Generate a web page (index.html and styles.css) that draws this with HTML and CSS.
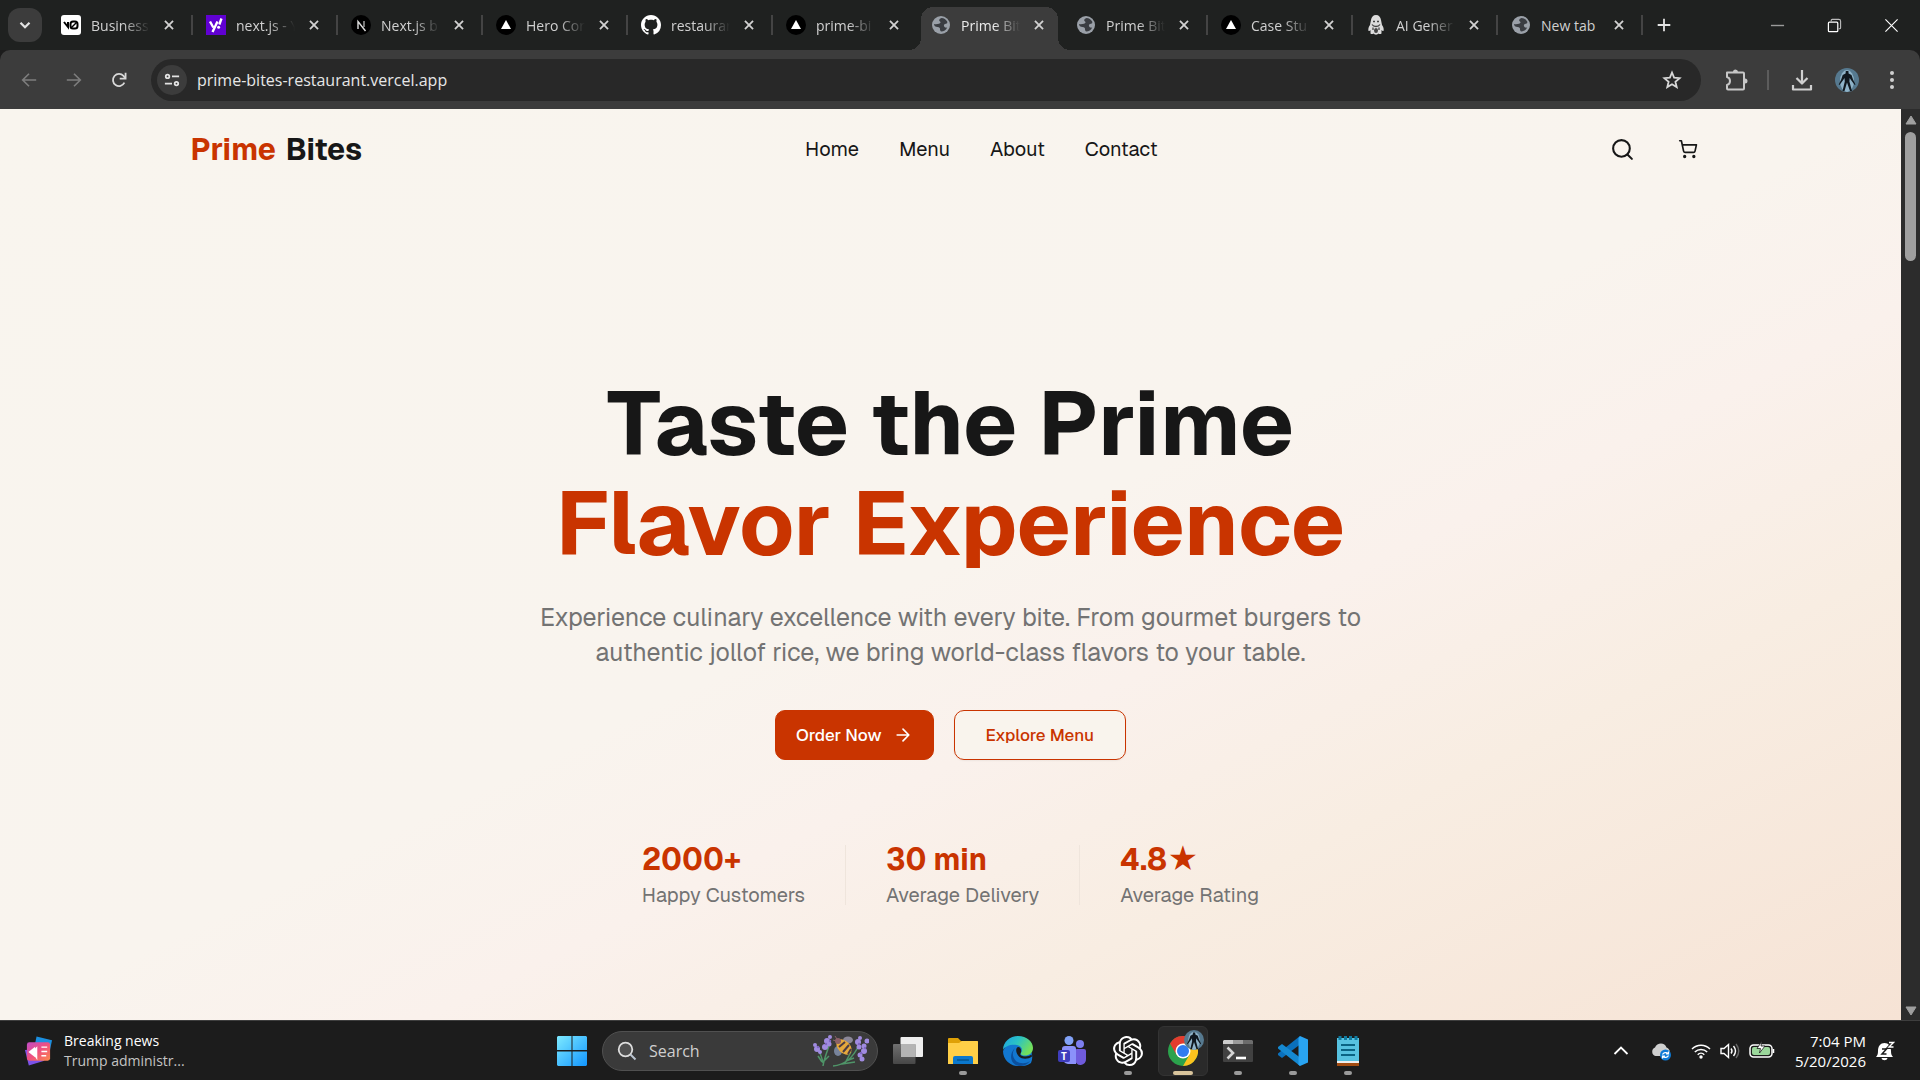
FILE: index.html
```html
<!DOCTYPE html>
<html lang="en">
<head>
    <meta charset="UTF-8">
    <meta name="viewport" content="width=device-width, initial-scale=1.0">
    <title>Prime Bites</title>
    <link rel="stylesheet" href="styles.css">
</head>
<body>
    <!-- Shared icons -->
    <svg class="sprite" aria-hidden="true">
        <symbol id="close" viewBox="0 0 20 20"><path d="M5.500 5.500l9 9M14.500 5.500l-9 9" fill="none" stroke="#d2d2d2" stroke-width="2"/></symbol>
        <symbol id="vercel" viewBox="0 0 20 20"><circle cx="10" cy="10" r="10" fill="#000"/><path d="M10 5l5 9H5z" fill="#fff"/></symbol>
        <symbol id="globe" viewBox="0 0 20 20">
            <circle cx="10" cy="10" r="9" fill="#9aa0a8"/>
            <path d="M10.500 3c-2.500 1-3 2.500-1.500 3.500 1 .6.500 2-1 2.200C6.500 9 5.500 9.500 3 9c0 2 1.500 3 3.500 3 2 0 2.500 1 2.500 2s0 1.500 1 2.500c3 0 5-1.500 6.200-4-1.700.500-2.700-.200-3.200-1.500-.5-1.200.5-2 2-2.200 1-.1 1.500-.8 1.300-2C15 4.500 13 3 10.500 3z" fill="#3a3d42"/>
        </symbol>
        <symbol id="hero-man" viewBox="0 0 24 24">
            <circle cx="12" cy="12" r="12" fill="#56798f"/>
            <ellipse cx="12" cy="13" rx="7" ry="11" fill="#8fb3c8"/>
            <path d="M10.800 3h2.600l.2 2.500 2.900 1.500 1.500 4.500 2.500 5-.8.5-3.700-5-1.300-2-.3 3.500L17 23h-2l-3-8.500L9.500 23h-2L9.800 13.500 9.500 10l-1.300 2-3.700 5-.8-.5 2.500-5L7.700 7l2.900-1.500z" fill="#10181f"/>
        </symbol>
    </svg>

    <!-- Tabs -->
    <header class="tab-strip">
        <button class="tab-search" aria-label="Search tabs"><svg viewBox="0 0 16 16"><path d="M4 6l4 4 4-4" fill="none" stroke="#e3e3e3" stroke-width="2"/></svg></button>
        <div class="tabs">
            <div class="tab">
                <svg class="favicon" viewBox="0 0 20 20"><rect width="20" height="20" rx="3" fill="#fff"/><path d="M3 7l4 5V7" fill="none" stroke="#000" stroke-width="2"/><rect x="9.500" y="6.500" width="7" height="7" rx="2.500" fill="none" stroke="#000" stroke-width="2"/><path d="M10 13l6-6" stroke="#000" stroke-width="1.500"/></svg>
                <span class="tab-title">Business</span>
                <button class="tab-close" aria-label="Close tab"><svg><use href="#close"/></svg></button>
            </div>
            <div class="tab">
                <svg class="favicon" viewBox="0 0 20 20"><rect width="20" height="20" fill="#6001d2"/><path d="M4 6.500l3.300 6M11.500 6.500L6.500 17" fill="none" stroke="#fff" stroke-width="2.400"/><path d="M15.500 3.500l-2.200 6" stroke="#fff" stroke-width="2.400"/><circle cx="12.600" cy="12.200" r="1.500" fill="#fff"/></svg>
                <span class="tab-title">next.js - Y</span>
                <button class="tab-close" aria-label="Close tab"><svg><use href="#close"/></svg></button>
            </div>
            <div class="tab">
                <svg class="favicon" viewBox="0 0 20 20"><circle cx="10" cy="10" r="10" fill="#000"/><path d="M7 14V6.500l7.500 9.500" fill="none" stroke="#ddd" stroke-width="1.400"/><path d="M13 6v6" stroke="#aaa" stroke-width="1.400"/></svg>
                <span class="tab-title">Next.js b</span>
                <button class="tab-close" aria-label="Close tab"><svg><use href="#close"/></svg></button>
            </div>
            <div class="tab">
                <svg class="favicon"><use href="#vercel"/></svg>
                <span class="tab-title">Hero Cor</span>
                <button class="tab-close" aria-label="Close tab"><svg><use href="#close"/></svg></button>
            </div>
            <div class="tab">
                <svg class="favicon" viewBox="0 0 16 16"><path fill="#fff" d="M8 0C3.580 0 0 3.580 0 8c0 3.540 2.290 6.530 5.470 7.590.4.070.55-.17.55-.38 0-.19-.01-.82-.01-1.490-2.010.37-2.530-.49-2.690-.94-.09-.23-.48-.94-.82-1.130-.28-.15-.68-.52-.01-.53.63-.01 1.080.58 1.230.82.72 1.210 1.870.87 2.330.66.07-.52.28-.87.51-1.070-1.780-.2-3.640-.89-3.640-3.950 0-.87.31-1.590.82-2.150-.08-.2-.36-1.020.08-2.120 0 0 .67-.21 2.200.82.64-.18 1.320-.27 2-.27s1.360.09 2 .27c1.530-1.040 2.200-.82 2.200-.82.44 1.100.16 1.920.08 2.120.51.56.82 1.270.82 2.150 0 3.070-1.870 3.750-3.650 3.950.29.25.54.73.54 1.480 0 1.070-.01 1.930-.01 2.200 0 .21.15.46.55.38A8.010 8.010 0 0016 8c0-4.420-3.580-8-8-8z"/></svg>
                <span class="tab-title">restaurar</span>
                <button class="tab-close" aria-label="Close tab"><svg><use href="#close"/></svg></button>
            </div>
            <div class="tab no-line">
                <svg class="favicon"><use href="#vercel"/></svg>
                <span class="tab-title">prime-bi</span>
                <button class="tab-close" aria-label="Close tab"><svg><use href="#close"/></svg></button>
            </div>
            <div class="tab active no-line">
                <svg class="favicon"><use href="#globe"/></svg>
                <span class="tab-title">Prime Bit</span>
                <button class="tab-close" aria-label="Close tab"><svg><use href="#close"/></svg></button>
            </div>
            <div class="tab">
                <svg class="favicon"><use href="#globe"/></svg>
                <span class="tab-title">Prime Bit</span>
                <button class="tab-close" aria-label="Close tab"><svg><use href="#close"/></svg></button>
            </div>
            <div class="tab">
                <svg class="favicon"><use href="#vercel"/></svg>
                <span class="tab-title">Case Stu</span>
                <button class="tab-close" aria-label="Close tab"><svg><use href="#close"/></svg></button>
            </div>
            <div class="tab">
                <svg class="favicon" viewBox="0 0 20 20"><path d="M10 0c3 0 4.500 2 5 5l1 5c1.500 2 2 4 1.500 6-1 0-1.500-.5-2-1v3.500c-1 1-2.500.500-3 0-1 1.500-4 1.500-5 0-1 .7-2.500.7-3 0V15c-.5.600-1 1-2 1-.5-2 0-4 1.500-6l1-5c.5-3 2-5 5-5z" fill="#dcdcdc"/><path d="M7 6.500h2M11 6.500h2M6 9.500c1 1.500 2 2 4 2s3-.5 4-2M7 12.500v2.500M13 12.500v2.500" fill="none" stroke="#444" stroke-width="1.300"/><ellipse cx="10" cy="15.500" rx="2" ry="2.500" fill="#444"/></svg>
                <span class="tab-title">AI Gener</span>
                <button class="tab-close" aria-label="Close tab"><svg><use href="#close"/></svg></button>
            </div>
            <div class="tab">
                <svg class="favicon"><use href="#globe"/></svg>
                <span class="tab-title full">New tab</span>
                <button class="tab-close" aria-label="Close tab"><svg><use href="#close"/></svg></button>
            </div>
        </div>
        <button class="new-tab" aria-label="New tab"><svg viewBox="0 0 20 20"><path d="M10 3v14M3 10h14" stroke="#e3e3e3" stroke-width="2"/></svg></button>
        <div class="window-controls">
            <button aria-label="Minimize"><svg viewBox="0 0 16 16"><path d="M1 8h14" stroke="#9a9a9a" stroke-width="1.500"/></svg></button>
            <button aria-label="Restore"><svg viewBox="0 0 16 16"><path d="M4.500 3.500V2.500a1 1 0 011-1h7a2 2 0 012 2v7a1 1 0 01-1 1h-1" fill="none" stroke="#bbb" stroke-width="1.200"/><rect x="1.500" y="4.500" width="10" height="10" rx="1" fill="none" stroke="#fff" stroke-width="1.300"/></svg></button>
            <button aria-label="Close"><svg viewBox="0 0 16 16"><path d="M1.500 1.500l13 13M14.500 1.500l-13 13" stroke="#fff" stroke-width="1.200"/></svg></button>
        </div>
    </header>

    <!-- Toolbar -->
    <div class="toolbar">
        <div class="nav-buttons">
            <button aria-label="Back"><svg viewBox="0 0 20 20"><path d="M18 10H4M10 3l-7 7 7 7" fill="none" stroke="#7d7d7d" stroke-width="1.800"/></svg></button>
            <button aria-label="Forward"><svg viewBox="0 0 20 20"><path d="M2 10h14M10 3l7 7-7 7" fill="none" stroke="#7d7d7d" stroke-width="1.800"/></svg></button>
            <button aria-label="Reload"><svg viewBox="0 0 20 20"><path d="M16 13a6.700 6.700 0 11-1-7.500L17 8" fill="none" stroke="#d8d8d8" stroke-width="2"/><path d="M17.300 2v6.500h-6.500" fill="none" stroke="#d8d8d8" stroke-width="2"/></svg></button>
        </div>
        <form class="address-bar">
            <button type="button" class="site-info" aria-label="Site information"><svg viewBox="0 0 18 18"><g fill="none" stroke="#e3e3e3" stroke-width="2"><circle cx="4" cy="5" r="2"/><path d="M9 5h8M1 13h8"/><circle cx="14" cy="13" r="2"/></g></svg></button>
            <input type="text" class="address" aria-label="Address" value="prime-bites-restaurant.vercel.app">
            <button type="button" class="bookmark" aria-label="Bookmark"><svg viewBox="0 0 20 20"><path d="M10 2.500l2.100 5.100 5.500.5-4.200 3.600 1.300 5.400-4.700-2.900-4.700 2.900 1.300-5.400-4.200-3.600 5.500-.5z" fill="none" stroke="#d8d8d8" stroke-width="1.800"/></svg></button>
        </form>
        <div class="toolbar-actions">
            <button aria-label="Extensions"><svg viewBox="0 0 24 24"><path d="M3 4.500h16a1 1 0 011 1v15a1 1 0 01-1 1H4a1 1 0 01-1-1V17c4-1 4-7 0-8z" fill="none" stroke="#c7c7c7" stroke-width="2" stroke-linejoin="round"/><path d="M9 4a2.500 2.500 0 015 0zM21 10.500a2.500 2.500 0 010 5z" fill="#c7c7c7"/></svg></button>
            <span class="toolbar-line"></span>
            <button aria-label="Downloads"><svg viewBox="0 0 24 24"><path d="M12 2v13M6.500 10l5.500 5.500L17.500 10M3 17v4.500h18V17" fill="none" stroke="#d0d0d0" stroke-width="2.200" stroke-linejoin="round"/></svg></button>
            <button class="profile" aria-label="Profile"><svg><use href="#hero-man"/></svg></button>
            <button aria-label="Menu"><svg viewBox="0 0 24 24" fill="#d0d0d0"><circle cx="12" cy="5" r="2"/><circle cx="12" cy="12" r="2"/><circle cx="12" cy="19" r="2"/></svg></button>
        </div>
    </div>

    <!-- Page -->
    <div class="viewport">
        <div class="page">
            <nav class="site-nav">
                <a href="#" class="logo"><span>Prime</span> Bites</a>
                <ul class="nav-links">
                    <li><a href="#">Home</a></li>
                    <li><a href="#">Menu</a></li>
                    <li><a href="#">About</a></li>
                    <li><a href="#">Contact</a></li>
                </ul>
                <div class="nav-actions">
                    <button aria-label="Search"><svg class="icon-search" viewBox="0 0 24 24"><circle cx="11" cy="11" r="8"/><path d="M21 21l-4.300-4.300"/></svg></button>
                    <button aria-label="Cart"><svg class="icon-cart" viewBox="0 0 24 24"><circle cx="8" cy="21" r="1"/><circle cx="19" cy="21" r="1"/><path d="M2.050 2.050h2l2.660 12.420a2 2 0 002 1.580h9.780a2 2 0 001.950-1.570l1.650-7.430H5.120"/></svg></button>
                </div>
            </nav>

            <main class="hero">
                <h1>Taste the Prime <span>Flavor Experience</span></h1>
                <p class="lead">Experience culinary excellence with every bite. From gourmet burgers to authentic jollof rice, we bring world-class flavors to your table.</p>
                <div class="hero-buttons">
                    <button class="btn btn-primary">Order Now <svg viewBox="0 0 24 24"><path d="M5 12h14M12 5l7 7-7 7"/></svg></button>
                    <button class="btn btn-outline">Explore Menu</button>
                </div>
                <div class="stats">
                    <div class="stat"><strong>2000+</strong><span>Happy Customers</span></div>
                    <div class="stat"><strong>30 min</strong><span>Average Delivery</span></div>
                    <div class="stat"><strong>4.8★</strong><span>Average Rating</span></div>
                </div>
            </main>
        </div>
        <div class="scrollbar">
            <svg viewBox="0 0 12 10"><path d="M6 1l5 8H1z" fill="#9f9f9f" stroke="#9f9f9f" stroke-linejoin="round"/></svg>
            <div class="thumb"></div>
            <svg viewBox="0 0 12 10"><path d="M6 9l5-8H1z" fill="#9f9f9f" stroke="#9f9f9f" stroke-linejoin="round"/></svg>
        </div>
    </div>

    <!-- Taskbar -->
    <footer class="taskbar">
        <button class="news">
            <svg viewBox="0 0 30 32">
                <defs><linearGradient id="news" x1="0" y1="0" x2="1" y2="1"><stop offset="0" stop-color="#c04bc8"/><stop offset=".5" stop-color="#f0507f"/><stop offset="1" stop-color="#fb8a4a"/></linearGradient></defs>
                <path d="M13 1l16 4-3 14-16-4z" fill="#1b8fe0"/><path d="M1 15l4 16 16-5-3-12z" fill="#7b52e8"/>
                <rect x="3" y="7" width="24" height="19" rx="2.500" fill="url(#news)"/>
                <path d="M4.500 17l7-5.500v11z" fill="#fff"/><path d="M9 17l4 6V13zM18 12h6M18 16.500h6M18 21h5" fill="#fff" stroke="#fff" stroke-width="1.500"/>
            </svg>
            <span class="news-text"><span>Breaking news</span><span class="muted">Trump administr...</span></span>
        </button>

        <div class="apps">
            <button class="app" aria-label="Start"><svg viewBox="0 0 30 30"><defs><linearGradient id="win" x1="0" y1="0" x2="1" y2="1"><stop offset="0" stop-color="#7eeaff"/><stop offset="1" stop-color="#1296ff"/></linearGradient></defs><path d="M1 0h13.500v14H0V1zM15.500 0H29l1 1v13H15.500zM0 15.500h14.500V30H1l-1-1zM15.500 15.500H30V29l-1 1H15.500z" fill="url(#win)"/></svg></button>
            <label class="search">
                <svg class="search-icon" viewBox="0 0 20 20"><circle cx="8.500" cy="8.500" r="6.800" fill="#505050" stroke="#ddd" stroke-width="1.800"/><path d="M13.500 13.500l5 5" stroke="#bbc4d0" stroke-width="2"/></svg>
                <input type="text" placeholder="Search" aria-label="Search">
                <svg class="search-art" viewBox="0 0 56 32">
                    <g fill="none" stroke="#4f9468" stroke-width="1.500"><path d="M10 31c1-7 4-14 6-20M10 28c-1-6-3-10-5-14M9 27l-4-6M11 26l5-5M20 31c12-1 20-8 26-21M32 28l6-11M29 29l13-2M33 26l8-3"/></g>
                    <g fill="#a08be0"><circle cx="2" cy="10" r="2"/><circle cx="4" cy="14" r="3"/><circle cx="7" cy="17" r="2"/><circle cx="17" cy="2" r="2"/><circle cx="14" cy="6" r="3"/><circle cx="16" cy="9" r="2.500"/><circle cx="12" cy="12" r="3"/><circle cx="47" cy="3" r="2"/><circle cx="45" cy="7" r="3"/><circle cx="46" cy="12" r="2.500"/><circle cx="54" cy="6" r="2.500"/><circle cx="51" cy="11" r="2.500"/><circle cx="51" cy="16" r="3"/><circle cx="47" cy="20" r="2.500"/><circle cx="49" cy="24" r="2.500"/></g>
                    <g fill="#8067c4"><circle cx="5" cy="12" r="1.200"/><circle cx="13" cy="9" r="1.200"/><circle cx="17" cy="6" r="1.200"/><circle cx="46" cy="9" r="1.200"/><circle cx="52" cy="13" r="1.200"/><circle cx="48" cy="18" r="1.200"/></g>
                    <ellipse cx="35" cy="5" rx="5" ry="3.500" fill="#8b8798"/><ellipse cx="25" cy="16" rx="4" ry="5" fill="#77839b"/>
                    <ellipse cx="31" cy="12" rx="9" ry="6" fill="#e6a83c" transform="rotate(45 31 12)"/><path d="M26 12l6-5M30 17l6-7M35 19l3-5" stroke="#4c3b44" stroke-width="2"/><circle cx="25" cy="6" r="3" fill="#8b6068"/><path d="M24 4l-2-3M23 6l-3-1" stroke="#8b6068"/>
                </svg>
            </label>
            <button class="app" aria-label="Task view"><svg viewBox="0 0 30 30"><defs><linearGradient id="tv" x1="0" y1="0" x2="0" y2="1"><stop offset="0" stop-color="#707070"/><stop offset="1" stop-color="#474747"/></linearGradient></defs><rect x="7.500" y="1" width="22.500" height="20" rx="1" fill="#eee"/><rect y="8" width="22.500" height="20" rx="1" fill="url(#tv)"/><path d="M8 8h14.500v13H8z" fill="#b4b4b4"/></svg></button>
            <button class="app open" aria-label="File Explorer"><svg viewBox="0 0 30 30"><path d="M0 3a1 1 0 011-1h9l3 3h16a1 1 0 011 1v6H0z" fill="#dfa106"/><path d="M0 7h11l3-2h15a1 1 0 011 1v22H0z" fill="#ffcf47"/><path d="M5 28v-6a2 2 0 012-2h16a2 2 0 012 2v6z" fill="#0b78cd"/><path d="M9 24h12" stroke="#05558f" stroke-width="1.500"/></svg></button>
            <button class="app" aria-label="Edge"><svg viewBox="0 0 30 30"><defs><linearGradient id="edge" x1="0" y1="0" x2="1" y2=".5"><stop offset="0" stop-color="#1ba0e6"/><stop offset=".5" stop-color="#2bc3c4"/><stop offset="1" stop-color="#74e05a"/></linearGradient></defs><path d="M0 15a15 15 0 0128 12C24 30 20 30 16 30A15 15 0 010 15z" fill="#1277d0"/><path d="M0 14C0 6 7 0 15 0c9 0 15 6 15 12 0 5-4 7.500-8 7.500-3 0-5-1-4-2.500 2-3 1-7-4-8C8 8 2 10 0 14z" fill="url(#edge)"/><path d="M12 12c-3 4-3 9 1 13 4 3 10 3 14 0-2 3-6 5-11 5C8 29 5 19 12 12z" fill="#0c4f9c"/><path d="M15 11c3 0 4 4 2.500 6.500-1 1.500 1 3 4.500 3 3 0 5-1 6.500-2l.5 2c-4 3-10 3-13 0-3-3-4-8-1-9.500z" fill="#1c1c1c"/></svg></button>
            <button class="app" aria-label="Teams"><svg viewBox="0 0 30 30"><circle cx="11" cy="4.500" r="4.500" fill="#82a2f7"/><circle cx="22" cy="8" r="4" fill="#7d7ff0"/><path d="M17 15a2 2 0 012-2h7a2 2 0 012 2v8a5 5 0 01-11 1z" fill="#6f5bdc"/><path d="M4 13a3 3 0 013-3h8a3 3 0 013 3v15H10a7 7 0 01-6-7z" fill="#8b91fa"/><rect y="14" width="12" height="12" rx="2" fill="#3f3dbd"/><text x="6" y="24" text-anchor="middle" class="teams-t">T</text></svg></button>
            <button class="app open" aria-label="ChatGPT"><svg viewBox="0 0 24 24"><path fill="#fff" d="M22.282 9.821a5.985 5.985 0 00-.516-4.910 6.046 6.046 0 00-6.510-2.900A6.065 6.065 0 004.981 4.180a5.985 5.985 0 00-3.998 2.900 6.046 6.046 0 00.743 7.097 5.980 5.980 0 00.510 4.911 6.051 6.051 0 006.515 2.900A5.985 5.985 0 0013.260 24a6.056 6.056 0 005.772-4.206 5.990 5.990 0 003.998-2.900 6.056 6.056 0 00-.748-7.073zM13.260 22.430a4.476 4.476 0 01-2.877-1.041l.142-.080 4.778-2.758a.795.795 0 00.393-.681v-6.737l2.020 1.169a.071.071 0 01.038.052v5.583a4.504 4.504 0 01-4.494 4.493zM3.600 18.304a4.471 4.471 0 01-.535-3.014l.142.085 4.783 2.759a.771.771 0 00.781 0l5.843-3.369v2.332a.080.080 0 01-.033.062L9.740 19.950a4.500 4.500 0 01-6.140-1.646zM2.341 7.896a4.485 4.485 0 012.366-1.973V11.600a.766.766 0 00.388.677l5.815 3.354-2.020 1.169a.076.076 0 01-.071 0l-4.830-2.787A4.504 4.504 0 012.341 7.872zm16.597 3.855l-5.833-3.387L15.119 7.200a.076.076 0 01.071 0l4.830 2.791a4.494 4.494 0 01-.676 8.105v-5.678a.790.790 0 00-.407-.667zm2.010-3.023l-.142-.085-4.774-2.782a.776.776 0 00-.785 0L9.409 9.230V6.897a.066.066 0 01.028-.061l4.830-2.787a4.499 4.499 0 016.680 4.660zM8.307 12.863l-2.020-1.164a.080.080 0 01-.038-.057V6.075a4.499 4.499 0 017.375-3.453l-.142.080L8.704 5.460a.795.795 0 00-.393.681zm1.097-2.365l2.602-1.500 2.607 1.500v2.999l-2.597 1.500-2.607-1.500z"/></svg></button>
            <button class="app open current" aria-label="Chrome"><svg viewBox="0 0 30 30"><circle cx="15" cy="15" r="15" fill="#2ba24c"/><path d="M15 15L2 7.500A15 15 0 0128 7.500z" fill="#e33b2e"/><path d="M15 7.500h13A15 15 0 0115 30l6.500-11.200z" fill="#fcc31e"/><path d="M8.500 18.800L2 7.500 15 7.500z" fill="#e33b2e"/><circle cx="15" cy="15" r="7.500" fill="#fff"/><circle cx="15" cy="15" r="6" fill="#2f7cf0"/></svg><svg class="badge"><use href="#hero-man"/></svg></button>
            <button class="app open" aria-label="Terminal"><svg viewBox="0 0 30 30"><path d="M0 8h30v17a1 1 0 01-1 1H1a1 1 0 01-1-1z" fill="#414141"/><path d="M1 4h9v4H0V5z" fill="#ccc"/><path d="M10 4h10v4H10z" fill="#9b9b9b"/><path d="M20 4h9l1 1v3H20z" fill="#6c6c6c"/><path d="M4.500 11.500l5.500 5.500-5.500 5.500" fill="none" stroke="#d5d5d5" stroke-width="2.600"/><path d="M13 22h10" stroke="#fff" stroke-width="2.600"/></svg></button>
            <button class="app open" aria-label="Visual Studio Code"><svg viewBox="0 0 30 30"><path d="M22 0v8.500L4 22l-4-3v-1.500z" fill="#0a70bc"/><path d="M22 30v-8.500L4 8 0 11v1.500z" fill="#1589d1"/><path d="M22 0l8 3.500v23L22 30l-1.500-1.500V2z" fill="#29a4f2"/></svg></button>
            <button class="app open" aria-label="Notepad"><svg viewBox="0 0 30 30"><path d="M4 26h22v4H4z" fill="#a24c12"/><path d="M4 25h22v2H4z" fill="#eee"/><path d="M4 2h22v23H4z" fill="#57c2e0"/><path d="M8 9h14M8 14h14M8 19h14" stroke="#0a6383" stroke-width="2"/><path d="M7 0v4M12.500 0v4M17.500 0v4M23 0v4" stroke="#0e7aa0" stroke-width="3"/></svg></button>
        </div>

        <div class="tray">
            <button aria-label="Show hidden icons"><svg class="tray-icon" viewBox="0 0 20 20"><path d="M3.500 13L10 6.500l6.500 6.500" fill="none" stroke="#fff" stroke-width="1.800"/></svg></button>
            <button class="cloud" aria-label="OneDrive"><svg class="tray-icon" viewBox="0 0 20 20"><path d="M4.500 15a4.500 4.500 0 01-.5-8.500C6 1 14 1 15.500 6.500 20 8 20 15 16 15z" fill="#cfcfcf"/><circle cx="14.500" cy="14" r="5.500" fill="#0d7ad6"/><path d="M11.500 13.500c1-2 4-2.500 5.500-1M17.500 14.500c-1 2-4 2.500-5.500 1M17.500 10.500v2.500H15M11.500 17.500V15H14" fill="none" stroke="#fff" stroke-width="1.200"/></svg></button>
            <button class="quick-settings" aria-label="Network, volume, battery">
                <svg class="tray-icon" viewBox="0 0 20 20"><g fill="none" stroke="#fff" stroke-width="1.500"><path d="M1 8a12.700 12.700 0 0118 0M3.800 11a8.800 8.800 0 0112.400 0M6.700 13.700a4.700 4.700 0 016.600 0"/></g><circle cx="10" cy="16" r="1.700" fill="#fff"/></svg>
                <svg class="tray-icon" viewBox="0 0 20 20"><g fill="none" stroke="#fff" stroke-width="1.400"><path d="M1 7.500h3L8.500 3.500v13L4 12.500H1z"/><path d="M11 7.500q2 2.500 0 5M13.500 5q4 5 0 10"/><path d="M16 3q5.500 7 0 14" stroke="#666"/></g></svg>
                <svg class="battery" viewBox="0 0 26 20"><rect x="1" y="4" width="22" height="12" rx="3.500" fill="none" stroke="#fff" stroke-width="1.500"/><rect x="3" y="6" width="18" height="8" rx="2" fill="#9bd79b"/><path d="M24.500 8v4" stroke="#fff" stroke-width="1.500"/><path d="M13 0L8 7.500h3.500L10.500 12l5.500-7h-4z" fill="#fff" stroke="#1c1c1c" stroke-width=".8"/></svg>
            </button>
            <div class="clock-group">
                <button class="clock"><span>7:04 PM</span><span>5/20/2026</span></button>
                <button aria-label="Notifications"><svg class="tray-icon" viewBox="0 0 20 20"><path d="M1 16c1.500-1.500 2-3 2-6C3 5 5.500 2 9.500 2S16 5 16 10c0 3 .5 4.500 2 6zM6.500 17h6c-.5 3-5.500 3-6 0z" fill="#fff"/><path d="M7 8h4.500L7 13h4.500" fill="none" stroke="#1c1c1c" stroke-width="1.500"/><path d="M13.500 1h5l-5 5.500h5" fill="none" stroke="#1c1c1c" stroke-width="3"/><path d="M14 1.500h4.500L14 6h4.500" fill="none" stroke="#fff" stroke-width="1.400"/></svg></button>
            </div>
        </div>
    </footer>
</body>
</html>
```
FILE: styles.css
```css
/* Theme Colors */
:root {
    --primary: #c93400;
    --cream: #f9f4ed;
    --ink: #171717;
    --muted: #737373;
    --strip: #1f2120;
    --toolbar: #3c3c3c;
    --field: #282828;
    --taskbar: #1c1c1c;
    --ui-font: "Segoe UI", "Open Sans", "Noto Sans", sans-serif;
    --site-font: Geist, Inter, sans-serif;
}

* {
    box-sizing: border-box;
}

body {
    margin: 0;
    min-height: 100vh;
    display: flex;
    flex-direction: column;
    font-family: var(--ui-font);
    background: var(--taskbar);
}

button {
    display: flex;
    align-items: center;
    justify-content: center;
    padding: 0;
    border: none;
    background: none;
    color: inherit;
    font: inherit;
    cursor: pointer;
}

input {
    min-width: 0;
    border: none;
    background: none;
    color: inherit;
    font: inherit;
    outline: none;
}

a {
    color: inherit;
    text-decoration: none;
}

.sprite {
    display: none;
}

/* Tabs */
.tab-strip {
    position: relative;
    z-index: 1;
    display: flex;
    align-items: center;
    height: 50px;
    padding-left: 8px;
    background: var(--strip);
    color: #d0d0d0;
}

.tab-search {
    width: 34px;
    height: 34px;
    border-radius: 12px;
    background: var(--toolbar);
}

.tab-search svg {
    width: 18px;
    height: 18px;
}

.tabs {
    display: flex;
    align-self: stretch;
    margin-left: 5px;
}

.tab {
    position: relative;
    display: flex;
    align-items: center;
    width: 145px;
    padding: 0 14px;
    font-size: 14px;
}

.tab::after {
    content: "";
    position: absolute;
    right: -1px;
    width: 2px;
    height: 20px;
    background: #444;
}

.tab.no-line::after {
    display: none;
}

.favicon {
    flex: none;
    width: 20px;
    height: 20px;
    margin-right: 10px;
}

.tab-title {
    flex: 1;
    overflow: hidden;
    white-space: nowrap;
    -webkit-mask-image: linear-gradient(to right, #000 55%, transparent);
    mask-image: linear-gradient(to right, #000 55%, transparent);
}

.tab-title.full {
    -webkit-mask-image: none;
    mask-image: none;
}

.tab-close {
    margin-left: 10px;
}

.tab-close svg {
    width: 18px;
    height: 18px;
}

.tab.active {
    color: #ececec;
    isolation: isolate;
}

.tab.active::before {
    content: "";
    position: absolute;
    z-index: -1;
    inset: 7px -8px 0;
    background:
        radial-gradient(circle at 0 0, transparent 12px, var(--toolbar) 12px) left bottom / 12px 12px no-repeat,
        radial-gradient(circle at 100% 0, transparent 12px, var(--toolbar) 12px) right bottom / 12px 12px no-repeat,
        linear-gradient(var(--toolbar), var(--toolbar)) center bottom / calc(100% - 24px) calc(100% - 12px) no-repeat,
        linear-gradient(var(--toolbar), var(--toolbar)) center top / calc(100% - 48px) 100% no-repeat,
        radial-gradient(circle at 100% 100%, var(--toolbar) 12px, transparent 12px) 12px 0 / 12px 12px no-repeat,
        radial-gradient(circle at 0 100%, var(--toolbar) 12px, transparent 12px) calc(100% - 12px) 0 / 12px 12px no-repeat;
}

.new-tab {
    width: 44px;
    height: 34px;
}

.new-tab svg {
    width: 18px;
    height: 18px;
}

.window-controls {
    display: flex;
    align-self: stretch;
    margin-left: auto;
}

.window-controls button {
    width: 57px;
}

.window-controls svg {
    width: 15px;
    height: 15px;
}

/* Toolbar */
.toolbar {
    display: flex;
    align-items: center;
    height: 59px;
    padding: 0 8px 0 9px;
    background: var(--toolbar);
    border-radius: 10px 10px 0 0;
}

.nav-buttons,
.toolbar-actions {
    display: flex;
    align-items: center;
}

.nav-buttons {
    gap: 5px;
    margin-right: 12px;
}

.nav-buttons button,
.toolbar-actions button {
    width: 40px;
    height: 40px;
}

.nav-buttons svg {
    width: 18px;
    height: 18px;
}

.toolbar-actions svg {
    width: 24px;
    height: 24px;
}

.toolbar-actions {
    gap: 5px;
    margin-left: 15px;
}

.toolbar-line {
    width: 2px;
    height: 20px;
    margin: 0 8px 0 6px;
    background: #5c5c5c;
}

.address-bar {
    flex: 1;
    display: flex;
    align-items: center;
    height: 42px;
    margin: 0;
    padding: 0 19px 0 6px;
    border-radius: 21px;
    background: var(--field);
    color: #e6e6e6;
}

.site-info {
    width: 30px;
    height: 30px;
    border-radius: 50%;
    background: var(--toolbar);
}

.site-info svg {
    width: 16px;
    height: 16px;
}

.address {
    flex: 1;
    padding: 0 10px;
    font-size: 16px;
}

.bookmark svg {
    width: 20px;
    height: 20px;
}

/* Page */
.viewport {
    flex: 1;
    display: flex;
}

.page {
    flex: 1;
    font-family: var(--site-font);
    color: var(--ink);
    background: linear-gradient(to bottom right, #f9f5ee 0%, #f9f4ee 50%, #faf1ec 61%, #f8ede2 75%, #f6e3d5 100%);
}

.site-nav {
    display: flex;
    align-items: center;
    justify-content: space-between;
    max-width: 1600px;
    height: 80px;
    margin: 0 auto;
    padding: 0 40px;
}

.logo {
    font-size: 30px;
    font-weight: 700;
}

.logo span {
    color: var(--primary);
    margin-right: 3px;
}

.nav-links {
    display: flex;
    gap: 40px;
    margin: 0;
    padding: 0;
    list-style: none;
    font-size: 20px;
}

.nav-actions {
    display: flex;
    gap: 20px;
}

.nav-actions button {
    width: 45px;
    height: 45px;
}

.nav-actions svg {
    fill: none;
    stroke: var(--ink);
    stroke-width: 2;
    stroke-linecap: round;
    stroke-linejoin: round;
}

.icon-search {
    width: 25px;
    height: 25px;
}

.icon-cart {
    width: 20px;
    height: 20px;
}

.hero {
    display: flex;
    flex-direction: column;
    align-items: center;
    padding: 185px 20px 40px;
    text-align: center;
}

.hero h1 {
    margin: 0;
    font-size: 90px;
    line-height: 100px;
    font-weight: 700;
}

.hero h1 span {
    display: block;
    color: var(--primary);
}

.lead {
    max-width: 840px;
    margin: 26px 0 40px;
    color: var(--muted);
    font-size: 25px;
    line-height: 35px;
}

.hero-buttons {
    display: flex;
    gap: 20px;
}

.btn {
    gap: 11px;
    height: 50px;
    border: 1px solid var(--primary);
    border-radius: 10px;
    font-size: 17px;
    font-weight: 500;
}

.btn-primary {
    padding: 0 20px;
    background: var(--primary);
    color: #fff;
}

.btn-primary svg {
    width: 20px;
    height: 20px;
    fill: none;
    stroke: #fff;
    stroke-width: 2;
    stroke-linecap: round;
    stroke-linejoin: round;
}

.btn-outline {
    padding: 0 31px;
    background: var(--cream);
    color: var(--primary);
    box-shadow: 0 1px 2px rgba(0, 0, 0, 0.05);
}

.stats {
    display: flex;
    align-items: center;
    gap: 40px;
    margin-top: 80px;
    text-align: left;
}

.stat {
    position: relative;
    display: flex;
    flex-direction: column;
}

.stat + .stat {
    padding-left: 41px;
}

.stat + .stat::before {
    content: "";
    position: absolute;
    left: 0;
    top: 5px;
    bottom: 5px;
    width: 1px;
    background: #efe5dc;
}

.stat strong {
    color: var(--primary);
    font-size: 30px;
    line-height: 40px;
}

.stat span {
    color: var(--muted);
    font-size: 20px;
    line-height: 30px;
}

.scrollbar {
    display: flex;
    flex-direction: column;
    align-items: center;
    width: 19px;
    padding: 6px 0 4px;
    background: #2c2c2c;
}

.scrollbar svg {
    width: 12px;
    height: 10px;
}

.thumb {
    width: 11px;
    height: 129px;
    margin: 7px 0 auto;
    border-radius: 6px;
    background: #9f9f9f;
}

/* Taskbar */
.taskbar {
    display: grid;
    grid-template-columns: 1fr auto 1fr;
    align-items: center;
    height: 60px;
    border-top: 1px solid #3e3e3e;
    background: var(--taskbar);
    color: #fff;
    font-size: 14px;
    line-height: 20px;
}

.news {
    justify-self: start;
    gap: 11px;
    margin-left: 24px;
    text-align: left;
}

.news svg {
    width: 29px;
    height: 32px;
}

.news-text {
    display: flex;
    flex-direction: column;
}

.muted {
    color: #c4c4c4;
}

.apps {
    display: flex;
    align-items: center;
    gap: 5px;
}

.app {
    position: relative;
    width: 50px;
    height: 50px;
    border-radius: 6px;
}

.app svg {
    width: 30px;
    height: 30px;
}

.app.open::after {
    content: "";
    position: absolute;
    bottom: 1px;
    width: 8px;
    height: 4px;
    border-radius: 2px;
    background: #9a9a9a;
}

.app.current {
    border: 1px solid #333;
    background: #2a2a2a;
}

.app.current::after {
    bottom: 0;
    width: 20px;
    background: #d8c49c;
}

.app .badge {
    position: absolute;
    top: 3px;
    right: 3px;
    width: 20px;
    height: 20px;
}

.teams-t {
    fill: #fff;
    font: bold 10px var(--ui-font);
}

.search {
    display: flex;
    align-items: center;
    width: 276px;
    height: 40px;
    padding: 0 8px 0 14px;
    border: 1px solid #505050;
    border-radius: 20px;
    background: #3a3a3a;
}

.search input {
    flex: 1;
    padding: 0 12px;
    font-size: 16px;
}

.search input::placeholder {
    color: #cfcfcf;
}

.search-icon {
    width: 20px;
    height: 20px;
}

.search-art {
    width: 56px;
    height: 32px;
}

.tray {
    display: flex;
    align-items: center;
    justify-self: end;
    gap: 20px;
    margin-right: 25px;
}

.tray-icon {
    width: 20px;
    height: 20px;
}

.quick-settings {
    gap: 9px;
}

.battery {
    width: 26px;
    height: 20px;
}

.clock-group {
    display: flex;
    align-items: center;
    gap: 9px;
}

.clock {
    flex-direction: column;
    align-items: flex-end;
    font-size: 15px;
}
```
